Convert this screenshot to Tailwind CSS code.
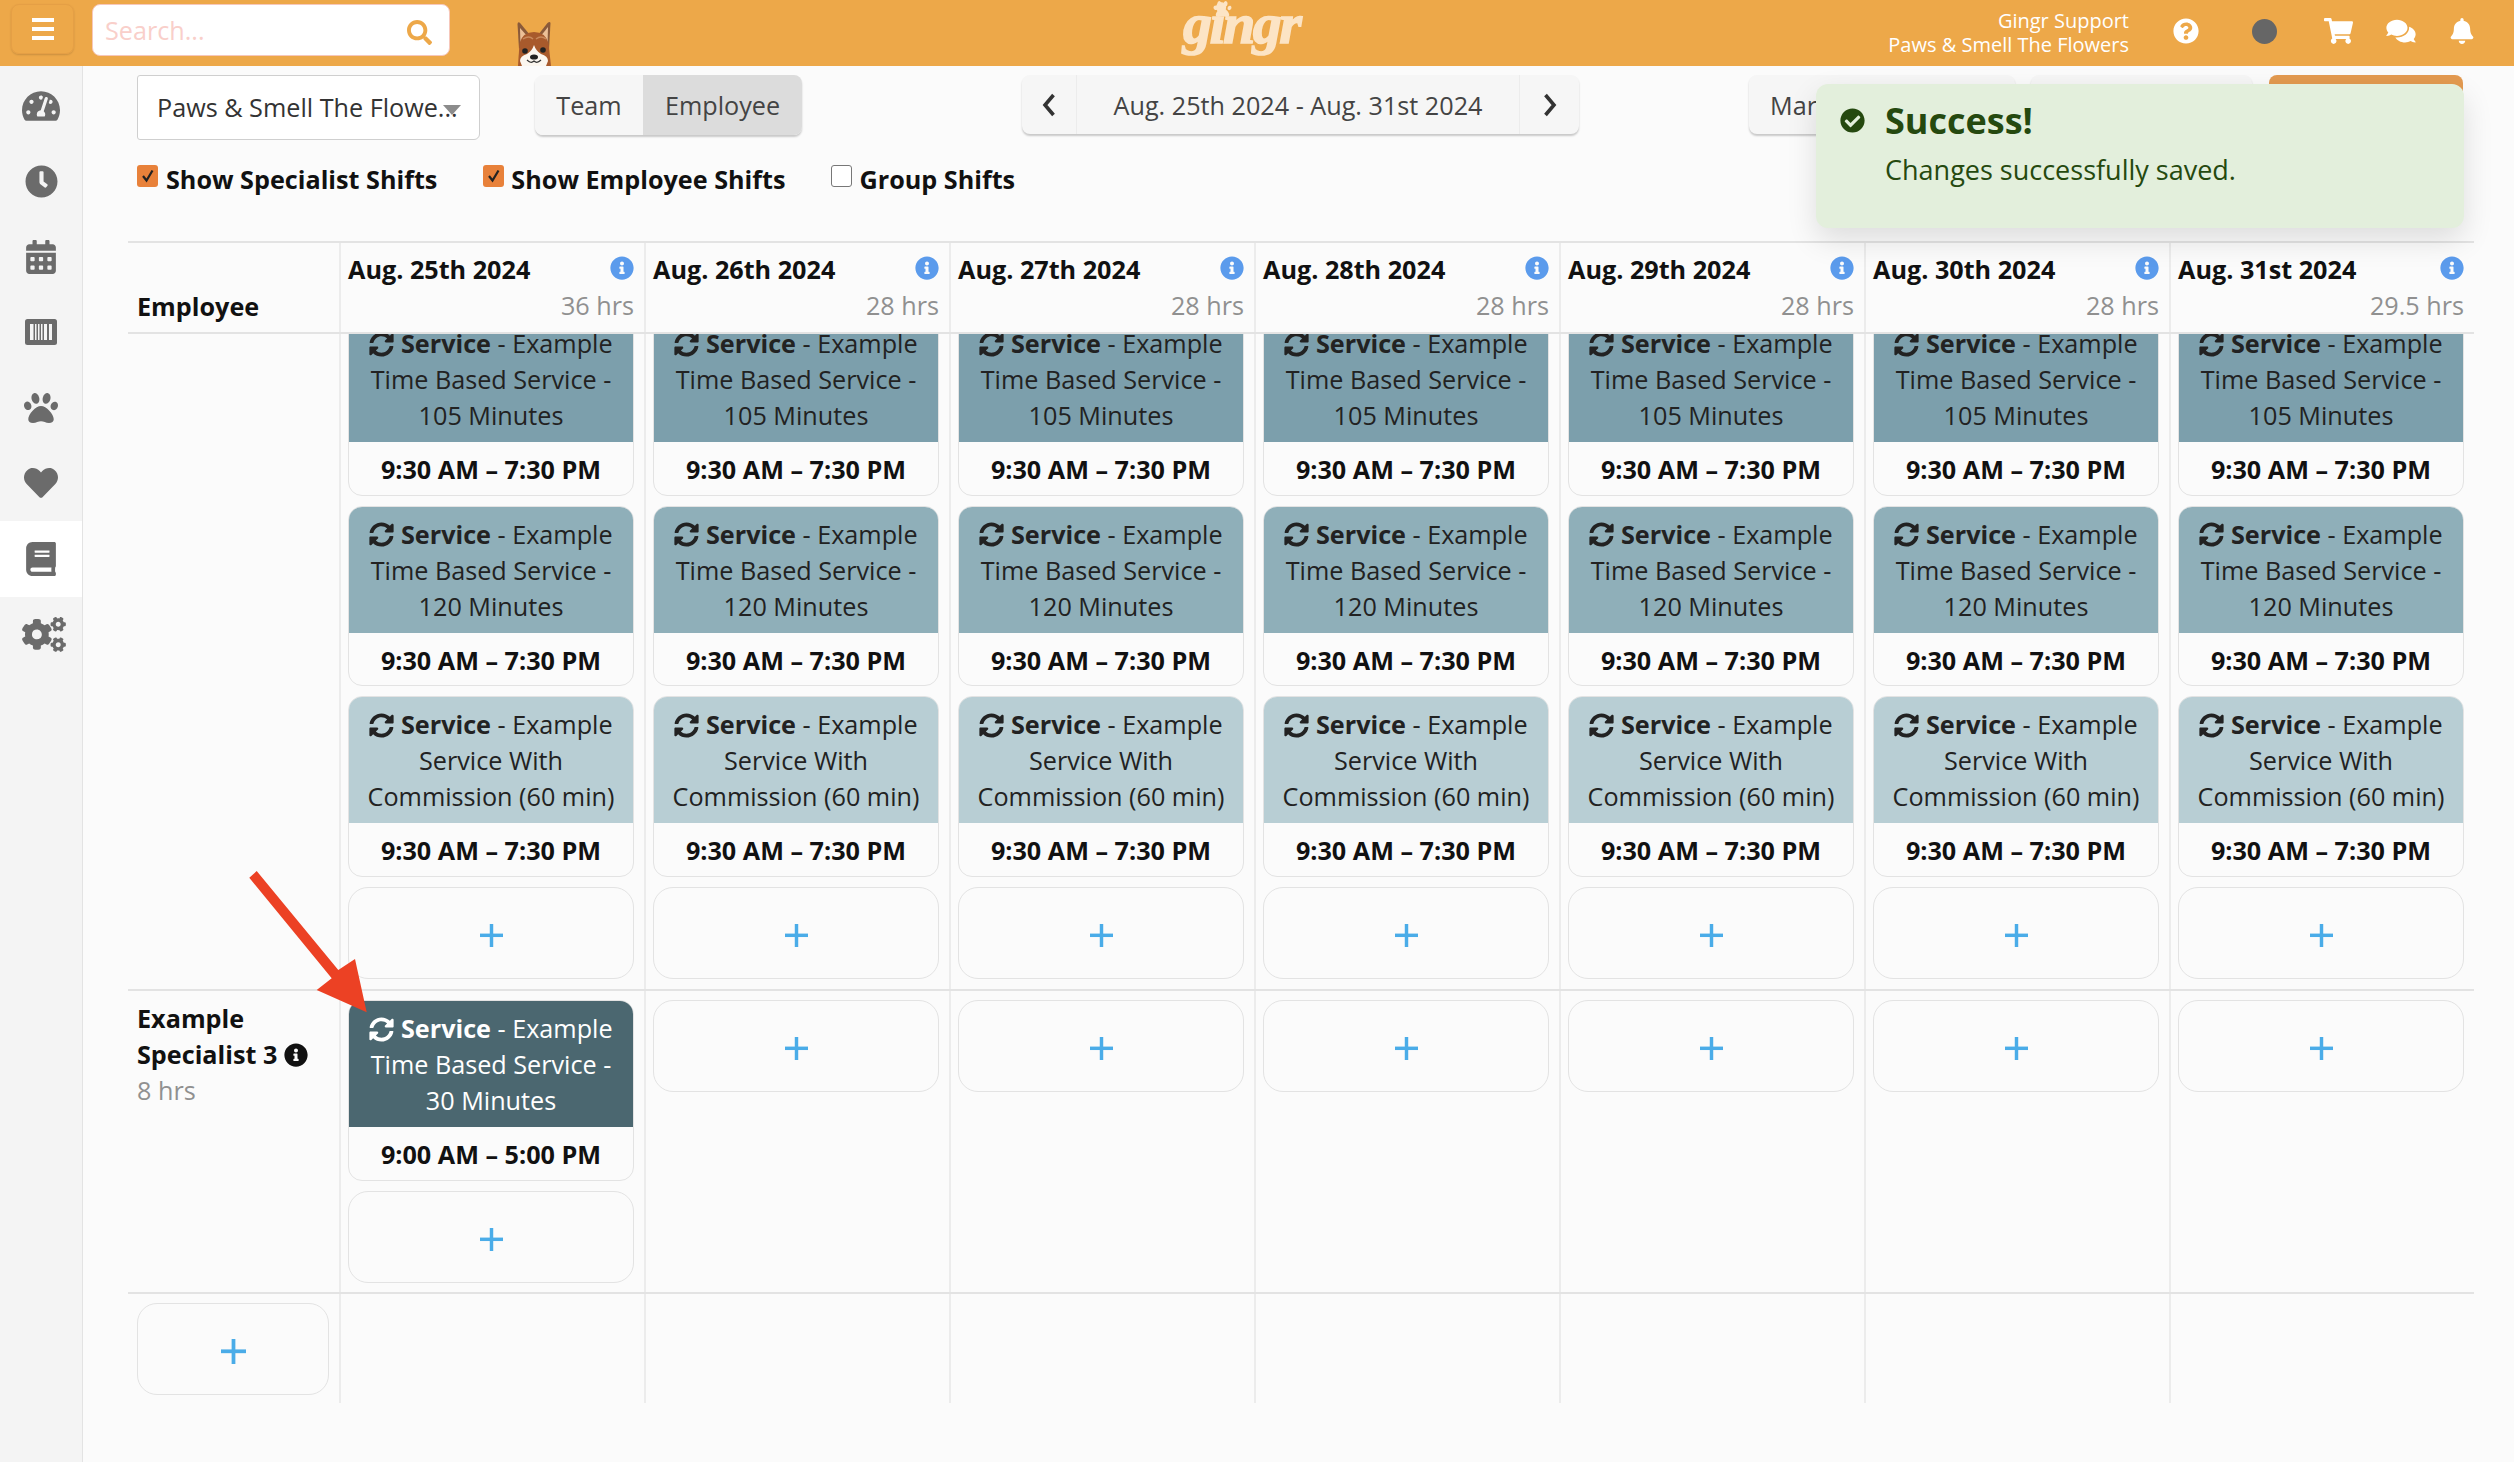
<!DOCTYPE html>
<html lang="en">
<head>
  <meta charset="UTF-8">
  <title>Gingr - Staff Schedule</title>
  <script src="https://cdn.jsdelivr.net/npm/@tailwindcss/browser@4"></script>
</head>
<body class="bg-[#fbfbfb] text-[#222] font-['Open_Sans',sans-serif] text-[25.2px] leading-[36px] h-[1462px] w-[2514px] overflow-hidden relative">

  <!-- icon sprites -->
  <svg class="hidden">
    <symbol id="sync" viewBox="0 0 512 512"><path fill="currentColor" d="M370.72 133.28C339.458 104.008 298.888 87.962 255.848 88c-77.458.068-144.328 53.178-162.791 126.85-1.344 5.363-6.122 9.15-11.651 9.15H24.103c-7.498 0-13.194-6.807-11.807-14.176C33.933 94.924 134.813 8 256 8c66.448 0 126.791 26.136 171.315 68.685L463.03 40.97C478.149 25.851 504 36.559 504 57.941V192c0 13.255-10.745 24-24 24H345.941c-21.382 0-32.09-25.851-16.971-40.971l41.75-41.749zM32 296h134.059c21.382 0 32.09 25.851 16.971 40.971l-41.75 41.75c31.262 29.273 71.835 45.319 114.876 45.28 77.418-.07 144.315-53.144 162.787-126.849 1.344-5.363 6.122-9.15 11.651-9.15h57.304c7.498 0 13.194 6.807 11.807 14.176C478.067 417.076 377.187 504 256 504c-66.448 0-126.791-26.136-171.315-68.685L48.97 471.03C33.851 486.149 8 475.441 8 454.059V320c0-13.255 10.745-24 24-24z"/></symbol>
    <symbol id="info" viewBox="0 0 512 512"><path fill="currentColor" d="M256 8C119.043 8 8 119.083 8 256c0 136.997 111.043 248 248 248s248-111.003 248-248C504 119.083 392.957 8 256 8zm0 110c23.196 0 42 18.804 42 42s-18.804 42-42 42-42-18.804-42-42 18.804-42 42-42zm56 254c0 6.627-5.373 12-12 12h-88c-6.627 0-12-5.373-12-12v-24c0-6.627 5.373-12 12-12h12v-64h-12c-6.627 0-12-5.373-12-12v-24c0-6.627 5.373-12 12-12h64c6.627 0 12 5.373 12 12v100h12c6.627 0 12 5.373 12 12v24z"/></symbol>
    <symbol id="plus" viewBox="0 0 24 24"><rect x="0" y="10" width="24" height="3.6" fill="currentColor"/><rect x="10.2" y="0" width="3.6" height="24" fill="currentColor"/></symbol>
  </svg>

  <!-- top bar -->
  <header class="h-[66px] bg-[#eda849] flex items-start relative">
    <button class="ml-[11px] mt-[4px] w-[63px] h-[50px] rounded-lg border border-[#e59f45] shadow-[0_1px_2px_rgba(0,0,0,0.15)] flex flex-col items-center justify-center gap-[5px]">
      <span class="w-[22px] h-[4px] bg-white"></span>
      <span class="w-[22px] h-[4px] bg-white"></span>
      <span class="w-[22px] h-[4px] bg-white"></span>
    </button>
    <div class="ml-[18px] mt-[4px] w-[358px] h-[52px] bg-white rounded-lg border border-[#f6c7bb] flex items-center pl-[12px] pr-[17px] justify-between">
      <span class="text-[#f9cfca]">Search...</span>
      <svg class="w-[25px] h-[25px] mt-[4px] text-[#eda849]" viewBox="0 0 512 512"><path fill="currentColor" d="M505 442.7L405.3 343c-4.5-4.5-10.6-7-17-7H372c27.6-35.3 44-79.7 44-128C416 93.1 322.9 0 208 0S0 93.1 0 208s93.1 208 208 208c48.3 0 92.7-16.4 128-44v16.3c0 6.4 2.5 12.5 7 17l99.7 99.7c9.4 9.4 24.6 9.4 33.9 0l28.3-28.3c9.4-9.4 9.4-24.6.1-34zM208 336c-70.7 0-128-57.2-128-128 0-70.7 57.2-128 128-128 70.7 0 128 57.2 128 128 0 70.7-57.2 128-128 128z"/></svg>
    </div>
    <!-- dog peeking over the content -->
    <svg class="ml-[65px] mt-[21px] w-[38px] h-[45px]" viewBox="0 0 38 45">
      <path d="M4 28 L2.500 3 Q3 0 5.500 2.500 L15 14 Z" fill="#8a5a3a"/>
      <path d="M34 28 L35.500 2 Q35 0 32.500 2 L23 14 Z" fill="#8a5a3a"/>
      <path d="M5.500 24 L5 7 L13 16 Z" fill="#ecc097"/>
      <path d="M32.500 24 L33 6 L25 16 Z" fill="#ecc097"/>
      <path d="M3 45 L4.500 22 Q8 11 19 11 Q30 11 33.500 22 L36 45 Z" fill="#a85a2c"/>
      <path d="M8 18 Q14 14 18 18 M21 18 Q26 14 31 18" stroke="#c98a5c" stroke-width="1.4" fill="none"/>
      <path d="M19 24 Q17 30 12 33 Q5 35 5 40 L7 45 L31 45 L33 40 Q33 35 26 33 Q21 30 19 24 Z" fill="#fbf6ef"/>
      <circle cx="10" cy="30" r="2.800" fill="#222"/>
      <circle cx="28" cy="29" r="2.800" fill="#222"/>
      <ellipse cx="19" cy="36" rx="4" ry="2.600" fill="#222"/>
      <path d="M12 39 Q16 43 19 40 Q22 43 26 39" stroke="#333" stroke-width="1.2" fill="none"/>
    </svg>
    <!-- logo -->
    <div class="ml-[630px] w-[120px] h-[66px] relative text-[#fce4c5]">
      <svg class="absolute left-[30px] top-0 w-[19px] h-[18px]" viewBox="0 0 512 512"><path fill="currentColor" d="M256 224c-79.41 0-192 122.76-192 200.25 0 34.9 26.81 55.75 71.74 55.75 48.84 0 81.09-25.08 120.26-25.08 39.51 0 71.85 25.08 120.26 25.08 44.93 0 71.74-20.85 71.74-55.75C448 346.76 335.41 224 256 224zm-147.28-12.61c-10.4-34.65-42.44-57.09-71.56-50.13-29.12 6.96-44.29 40.69-33.89 75.34 10.4 34.65 42.44 57.09 71.56 50.13 29.12-6.96 44.29-40.69 33.89-75.34zm84.72-20.78c30.94-8.14 46.42-49.94 34.58-93.36s-46.52-72.01-77.46-63.87-46.42 49.94-34.58 93.36c11.84 43.42 46.52 72.02 77.46 63.87zm281.39-29.34c-29.12-6.96-61.15 15.48-71.56 50.13-10.4 34.65 4.77 68.38 33.89 75.34 29.12 6.96 61.15-15.48 71.56-50.13 10.4-34.65-4.77-68.38-33.89-75.34zm-156.27 29.34c30.94 8.14 65.62-20.45 77.46-63.87 11.84-43.42-3.64-85.21-34.58-93.36s-65.62 20.45-77.46 63.87c-11.84 43.42 3.64 85.22 34.58 93.36z"/></svg>
      <span class="absolute left-0 top-0 font-['Liberation_Serif',serif] font-bold italic text-[58px] leading-[47px] tracking-[-2.500px] [-webkit-text-stroke:1.5px_#fce4c5]">gingr</span>
    </div>
    <!-- account and tools -->
    <div class="ml-auto flex items-center h-[66px] text-white">
      <div class="text-right text-[20px] leading-[24px] mr-[44px]">
        <div>Gingr Support</div>
        <div>Paws &amp; Smell The Flowers</div>
      </div>
      <svg class="w-[26px] h-[26px] mr-[53px] -mt-[4px]" viewBox="0 0 512 512"><path fill="currentColor" d="M504 256c0 136.997-111.043 248-248 248S8 392.997 8 256C8 119.083 119.043 8 256 8s248 111.083 248 248zM262.655 90c-54.497 0-89.255 22.957-116.549 63.758-3.536 5.286-2.353 12.415 2.715 16.258l34.699 26.31c5.205 3.947 12.621 3.008 16.665-2.122 17.864-22.658 30.113-35.797 57.303-35.797 20.429 0 45.698 13.148 45.698 32.958 0 14.976-12.363 22.667-32.534 33.976C247.128 238.528 216 254.941 216 296v4c0 6.627 5.373 12 12 12h56c6.627 0 12-5.373 12-12v-1.333c0-28.462 83.186-29.647 83.186-106.667 0-58.002-60.165-102-116.531-102zM256 338c-25.365 0-46 20.635-46 46 0 25.364 20.635 46 46 46s46-20.636 46-46c0-25.365-20.635-46-46-46z"/></svg>
      <span class="w-[25px] h-[25px] rounded-full bg-[#666] mr-[47px] -mt-[4px]"></span>
      <svg class="w-[29px] h-[26px] mr-[33px] -mt-[4px]" viewBox="0 0 576 512"><path fill="currentColor" d="M528.12 301.319l47.273-208C578.806 78.301 567.391 64 551.99 64H159.208l-9.166-44.81C147.758 8.021 137.93 0 126.529 0H24C10.745 0 0 10.745 0 24v16c0 13.255 10.745 24 24 24h69.883l70.248 343.435C147.325 417.1 136 435.222 136 456c0 30.928 25.072 56 56 56s56-25.072 56-56c0-15.674-6.447-29.835-16.824-40h209.647C430.447 426.165 424 440.326 424 456c0 30.928 25.072 56 56 56s56-25.072 56-56c0-22.172-12.888-41.332-31.579-50.405l5.517-24.276c3.413-15.018-8.002-29.319-23.403-29.319H218.117l-6.545-32h293.145c11.206 0 20.92-7.754 23.403-18.681z"/></svg>
      <svg class="w-[30px] h-[26px] mr-[34px] -mt-[4px]" viewBox="0 0 576 512"><path fill="currentColor" d="M416 192c0-88.4-93.1-160-208-160S0 103.6 0 192c0 34.3 14.1 65.9 38 92-13.4 30.2-35.5 54.2-35.8 54.5-2.2 2.3-2.8 5.7-1.5 8.7S4.8 352 8 352c36.6 0 66.9-12.3 88.7-25 32.2 15.7 70.3 25 111.3 25 114.9 0 208-71.6 208-160zm122 220c23.9-26 38-57.7 38-92 0-66.9-53.5-124.2-129.3-148.1.9 6.6 1.3 13.3 1.3 20.1 0 105.9-107.7 192-240 192-10.8 0-21.3-.8-31.7-1.9C207.8 439.6 281.8 480 368 480c41 0 79.1-9.2 111.3-25 21.8 12.7 52.1 25 88.7 25 3.2 0 6.1-1.9 7.3-4.8 1.3-2.9.7-6.3-1.5-8.7-.3-.3-22.4-24.2-35.8-54.5z"/></svg>
      <svg class="w-[24px] h-[26px] mr-[40px] -mt-[4px]" viewBox="0 0 448 512"><path fill="currentColor" d="M224 512c35.32 0 63.97-28.65 63.97-64H160.03c0 35.35 28.65 64 63.97 64zm215.39-149.71c-19.32-20.76-55.47-51.99-55.47-154.29 0-77.7-54.48-139.9-127.94-155.16V32c0-17.67-14.32-32-31.98-32s-31.98 14.33-31.98 32v20.84C118.56 68.1 64.08 130.3 64.08 208c0 102.3-36.15 133.53-55.47 154.29-6 6.45-8.66 14.16-8.61 21.71.11 16.4 12.98 32 32.1 32h383.8c19.12 0 32-15.6 32.1-32 .05-7.55-2.61-15.27-8.61-21.71z"/></svg>
    </div>
  </header>

  <div class="flex h-[1396px]">
    <!-- side nav -->
    <aside class="w-[83px] shrink-0 bg-[#f4f4f4] border-r border-[#e3e3e3] text-[#6b6b6b] pt-[2px]">
      <div class="h-[75.5px] flex items-center justify-center"><svg class="w-[38px] h-[38px]" viewBox="0 0 576 512"><path fill="currentColor" d="M288 32C128.94 32 0 160.94 0 320c0 52.8 14.25 102.26 39.06 144.8 5.61 9.62 16.3 15.2 27.44 15.2h443c11.14 0 21.83-5.58 27.44-15.2C561.75 422.26 576 372.8 576 320c0-159.06-128.94-288-288-288zm0 64c14.71 0 26.58 10.13 30.32 23.65-1.11 2.26-2.64 4.23-3.45 6.67l-9.22 27.67c-5.13 3.49-10.97 6.01-17.64 6.01-17.67 0-32-14.33-32-32S270.33 96 288 96zM96 384c-17.67 0-32-14.33-32-32s14.33-32 32-32 32 14.33 32 32-14.33 32-32 32zm48-160c-17.67 0-32-14.33-32-32s14.33-32 32-32 32 14.33 32 32-14.33 32-32 32zm246.77-72.41l-61.33 184C343.13 347.33 352 364.54 352 384c0 11.72-3.38 22.55-8.88 32H232.88c-5.5-9.45-8.88-20.28-8.88-32 0-33.94 26.5-61.43 59.9-63.59l61.34-184.01c4.17-12.56 17.73-19.45 30.36-15.17 12.57 4.19 19.35 17.79 15.17 30.36zm14.66 57.2l15.52-46.55c3.47-1.29 7.13-2.23 11.05-2.23 17.67 0 32 14.33 32 32s-14.33 32-32 32c-11.38-.01-20.89-6.28-26.57-15.22zM480 384c-17.67 0-32-14.33-32-32s14.33-32 32-32 32 14.33 32 32-14.33 32-32 32z"/></svg></div>
      <div class="h-[75.5px] flex items-center justify-center"><svg class="w-[33px] h-[33px]" viewBox="0 0 512 512"><path fill="currentColor" d="M256,8C119,8,8,119,8,256S119,504,256,504,504,393,504,256,393,8,256,8Zm92.49,313h0l-20,25a16,16,0,0,1-22.49,2.5h0l-67-49.72a40,40,0,0,1-15-31.23V112a16,16,0,0,1,16-16h32a16,16,0,0,1,16,16V256l58,42.5A16,16,0,0,1,348.49,321Z"/></svg></div>
      <div class="h-[75.5px] flex items-center justify-center"><svg class="w-[30px] h-[34px]" viewBox="0 0 448 512"><path fill="currentColor" d="M0 464c0 26.5 21.5 48 48 48h352c26.5 0 48-21.5 48-48V192H0v272zm320-196c0-6.6 5.4-12 12-12h40c6.6 0 12 5.4 12 12v40c0 6.6-5.4 12-12 12h-40c-6.6 0-12-5.4-12-12v-40zm0 128c0-6.6 5.4-12 12-12h40c6.6 0 12 5.4 12 12v40c0 6.6-5.4 12-12 12h-40c-6.6 0-12-5.4-12-12v-40zM192 268c0-6.6 5.4-12 12-12h40c6.6 0 12 5.4 12 12v40c0 6.6-5.4 12-12 12h-40c-6.6 0-12-5.4-12-12v-40zm0 128c0-6.6 5.4-12 12-12h40c6.6 0 12 5.4 12 12v40c0 6.6-5.4 12-12 12h-40c-6.6 0-12-5.4-12-12v-40zM64 268c0-6.6 5.4-12 12-12h40c6.6 0 12 5.4 12 12v40c0 6.6-5.4 12-12 12H76c-6.6 0-12-5.4-12-12v-40zm0 128c0-6.6 5.4-12 12-12h40c6.6 0 12 5.4 12 12v40c0 6.6-5.4 12-12 12H76c-6.6 0-12-5.4-12-12v-40zM400 64h-48V16c0-8.8-7.2-16-16-16h-32c-8.8 0-16 7.2-16 16v48H160V16c0-8.8-7.2-16-16-16h-32c-8.8 0-16 7.2-16 16v48H48C21.5 64 0 85.5 0 112v48h448v-48c0-26.5-21.5-48-48-48z"/></svg></div>
      <div class="h-[75.5px] flex items-center justify-center"><svg class="w-[32px] h-[26px]" viewBox="0 0 32 26"><rect width="32" height="26" rx="2.5" fill="currentColor"/><path d="M5 5h3.500v16H5zM10 5h1.500v16H10zM13 5h1.500v16H13zM16 5h1.500v16H16zM19 5h3v16h-3zM24 5h3v16h-3z" fill="#f4f4f4"/></svg></div>
      <div class="h-[75.5px] flex items-center justify-center"><svg class="w-[34px] h-[34px]" viewBox="0 0 512 512"><path fill="currentColor" d="M256 224c-79.41 0-192 122.76-192 200.25 0 34.9 26.81 55.75 71.74 55.75 48.84 0 81.09-25.08 120.26-25.08 39.51 0 71.85 25.08 120.26 25.08 44.93 0 71.74-20.85 71.74-55.75C448 346.76 335.41 224 256 224zm-147.28-12.61c-10.4-34.65-42.44-57.09-71.56-50.13-29.12 6.96-44.29 40.69-33.89 75.34 10.4 34.65 42.44 57.09 71.56 50.13 29.12-6.96 44.29-40.69 33.89-75.34zm84.72-20.78c30.94-8.14 46.42-49.94 34.58-93.36s-46.52-72.01-77.46-63.87-46.42 49.94-34.58 93.36c11.84 43.42 46.52 72.02 77.46 63.87zm281.39-29.34c-29.12-6.96-61.15 15.48-71.56 50.13-10.4 34.65 4.77 68.38 33.89 75.34 29.12 6.96 61.15-15.48 71.56-50.13 10.4-34.65-4.77-68.38-33.89-75.34zm-156.27 29.34c30.94 8.14 65.62-20.45 77.46-63.87 11.84-43.42-3.64-85.21-34.58-93.36s-65.62 20.45-77.46 63.87c-11.84 43.42 3.64 85.22 34.58 93.36z"/></svg></div>
      <div class="h-[75.5px] flex items-center justify-center"><svg class="w-[34px] h-[34px]" viewBox="0 0 512 512"><path fill="currentColor" d="M462.3 62.6C407.5 15.9 326 24.3 275.7 76.2L256 96.5l-19.7-20.3C186.1 24.3 104.5 15.9 49.7 62.6c-62.8 53.6-66.1 149.8-9.9 207.9l193.5 199.8c12.5 12.9 32.8 12.9 45.3 0l193.5-199.8c56.3-58.1 53-154.3-9.8-207.9z"/></svg></div>
      <div class="h-[75.5px] flex items-center justify-center bg-white"><svg class="w-[30px] h-[34px]" viewBox="0 0 448 512"><path fill="currentColor" d="M448 360V24c0-13.3-10.7-24-24-24H96C43 0 0 43 0 96v320c0 53 43 96 96 96h328c13.3 0 24-10.7 24-24v-16c0-7.5-3.5-14.3-8.9-18.7-4.2-15.4-4.2-59.3 0-74.7 5.4-4.3 8.9-11.1 8.9-18.6zM128 134c0-3.3 2.7-6 6-6h212c3.3 0 6 2.7 6 6v20c0 3.3-2.7 6-6 6H134c-3.3 0-6-2.7-6-6v-20zm0 64c0-3.3 2.7-6 6-6h212c3.3 0 6 2.7 6 6v20c0 3.3-2.7 6-6 6H134c-3.3 0-6-2.7-6-6v-20zm253.4 250H96c-17.7 0-32-14.3-32-32 0-17.6 14.4-32 32-32h285.4c-1.9 17.1-1.9 46.9 0 64z"/></svg></div>
      <div class="h-[75.5px] flex items-center justify-center pl-[5px]"><svg class="w-[44px] h-[35px]" viewBox="0 0 640 512"><path fill="currentColor" d="M512.1 191l-8.2 14.3c-3 5.3-9.4 7.5-15.1 5.4-11.8-4.4-22.6-10.7-32.1-18.6-4.6-3.8-5.8-10.5-2.8-15.7l8.2-14.3c-6.9-8-12.3-17.3-15.9-27.4h-16.5c-6 0-11.2-4.3-12.2-10.3-2-12-2.1-24.6 0-37.1 1-6 6.2-10.4 12.2-10.4h16.5c3.6-10.1 9-19.4 15.9-27.4l-8.2-14.3c-3-5.2-1.9-11.9 2.8-15.7 9.5-7.9 20.4-14.2 32.1-18.6 5.7-2.1 12.1.1 15.1 5.4l8.2 14.3c10.5-1.9 21.2-1.9 31.7 0L552 6.3c3-5.3 9.4-7.5 15.1-5.4 11.8 4.4 22.6 10.7 32.1 18.6 4.6 3.8 5.8 10.5 2.8 15.7l-8.2 14.3c6.9 8 12.3 17.3 15.9 27.4h16.5c6 0 11.2 4.3 12.2 10.3 2 12 2.1 24.6 0 37.1-1 6-6.2 10.4-12.2 10.4h-16.5c-3.6 10.1-9 19.4-15.9 27.4l8.2 14.3c3 5.2 1.9 11.9-2.8 15.7-9.5 7.9-20.4 14.2-32.1 18.6-5.7 2.1-12.1-.1-15.1-5.4l-8.2-14.3c-10.4 1.9-21.2 1.9-31.7 0zm-10.5-58.8c38.5 29.6 82.4-14.3 52.8-52.8-38.5-29.7-82.4 14.3-52.8 52.8zM386.3 286.1l33.7 16.8c10.1 5.8 14.5 18.1 10.5 29.1-8.9 24.2-26.4 46.4-42.6 65.8-7.4 8.9-20.2 11.1-30.3 5.3l-29.1-16.8c-16 13.7-34.6 24.6-54.9 31.7v33.6c0 11.6-8.3 21.6-19.7 23.6-24.6 4.2-50.4 4.4-75.9 0-11.5-2-20-11.9-20-23.6V418c-20.3-7.2-38.9-18-54.9-31.7L74 403c-10 5.8-22.9 3.6-30.3-5.3-16.2-19.4-33.3-41.6-42.2-65.7-4-10.9.4-23.2 10.5-29.1l33.3-16.8c-3.9-20.9-3.9-42.4 0-63.4L12 205.8c-10.1-5.8-14.6-18.1-10.5-29 8.9-24.2 26-46.4 42.2-65.8 7.4-8.9 20.2-11.1 30.3-5.3l29.1 16.8c16-13.7 34.6-24.6 54.9-31.7V57.1c0-11.5 8.2-21.5 19.6-23.5 24.6-4.2 50.5-4.4 76-.1 11.5 2 20 11.9 20 23.6v33.6c20.3 7.2 38.9 18 54.9 31.7l29.1-16.8c10-5.8 22.9-3.6 30.3 5.3 16.2 19.4 33.2 41.6 42.1 65.8 4 10.9.1 23.2-10 29.1l-33.7 16.8c3.9 21 3.9 42.5 0 63.5zm-117.6 21.1c59.2-77-28.7-164.9-105.7-105.7-59.2 77 28.7 164.9 105.7 105.7zm243.4 182.7l-8.2 14.3c-3 5.3-9.4 7.5-15.1 5.4-11.8-4.4-22.6-10.7-32.1-18.6-4.6-3.8-5.8-10.5-2.8-15.7l8.2-14.3c-6.9-8-12.3-17.3-15.9-27.4h-16.5c-6 0-11.2-4.3-12.2-10.3-2-12-2.1-24.6 0-37.1 1-6 6.2-10.4 12.2-10.4h16.5c3.6-10.1 9-19.4 15.9-27.4l-8.2-14.3c-3-5.2-1.9-11.9 2.8-15.7 9.5-7.9 20.4-14.2 32.1-18.6 5.7-2.1 12.1.1 15.1 5.4l8.2 14.3c10.5-1.9 21.2-1.9 31.7 0l8.2-14.3c3-5.3 9.4-7.5 15.1-5.4 11.8 4.4 22.6 10.7 32.1 18.6 4.6 3.8 5.8 10.5 2.8 15.7l-8.2 14.3c6.9 8 12.3 17.3 15.9 27.4h16.5c6 0 11.2 4.3 12.2 10.3 2 12 2.1 24.6 0 37.1-1 6-6.2 10.4-12.2 10.4h-16.5c-3.6 10.1-9 19.4-15.9 27.4l8.2 14.3c3 5.2 1.9 11.9-2.8 15.7-9.5 7.9-20.4 14.2-32.1 18.6-5.7 2.1-12.1-.1-15.1-5.4l-8.2-14.3c-10.4 1.9-21.2 1.9-31.7 0zM501.6 431c38.5 29.6 82.4-14.3 52.8-52.8-38.5-29.6-82.4 14.3-52.8 52.8z"/></svg></div>
    </aside>

    <main class="pl-[45px] pt-[9px]">
      <!-- toolbar -->
      <div class="flex items-start pl-[9px] h-[65px]">
        <div class="w-[343px] h-[65px] bg-white border border-[#cfcfcf] rounded-[3px] rounded-tr-md rounded-br-md flex items-center pl-[19px] pb-[2px] relative text-[#333]">
          Paws &amp; Smell The Flowe...
          <span class="absolute left-[305px] top-[29px] w-0 h-0 border-l-[9px] border-r-[9px] border-t-[10px] border-l-transparent border-r-transparent border-t-[#8c8c8c]"></span>
        </div>
        <div class="ml-[55px] flex w-[267px] h-[60px] rounded-lg shadow-[0_2px_2px_rgba(0,0,0,0.2)] text-[#444] overflow-hidden">
          <div class="w-[108px] bg-[#f6f6f6] flex items-center justify-center">Team</div>
          <div class="flex-1 bg-[#dcdcdc] flex items-center justify-center">Employee</div>
        </div>
        <div class="ml-[220px] flex w-[557px] h-[59px] rounded-lg bg-[#f6f6f6] shadow-[0_2px_2px_rgba(0,0,0,0.2)] text-[#444]">
          <div class="w-[55px] border-r border-[#ececec] flex items-center justify-center">
            <svg class="w-[14px] h-[24px]" viewBox="0 0 14 24"><path d="M11.5 2 L3 12 L11.5 22" stroke="#333" stroke-width="3.6" fill="none"/></svg>
          </div>
          <div class="flex-1 flex items-center justify-center">Aug. 25th 2024 - Aug. 31st 2024</div>
          <div class="w-[60px] border-l border-[#ececec] flex items-center justify-center">
            <svg class="w-[14px] h-[24px]" viewBox="0 0 14 24"><path d="M2.5 2 L11 12 L2.5 22" stroke="#333" stroke-width="3.6" fill="none"/></svg>
          </div>
        </div>
        <div class="ml-[170px] w-[266px] h-[59px] rounded-lg bg-[#f6f6f6] shadow-[0_2px_2px_rgba(0,0,0,0.2)] flex items-center pl-[21px] text-[#444]">Mark</div>
        <div class="ml-[16px] w-[221px] h-[59px] rounded-lg bg-[#f6f6f6] shadow-[0_2px_2px_rgba(0,0,0,0.2)]"></div>
        <div class="ml-[17px] w-[194px] h-[59px] rounded-lg bg-[#e39a50]"></div>
      </div>

      <!-- filters -->
      <div class="flex items-center pl-[9px] mt-[21px] h-[36px] font-bold text-[#111]">
        <span class="w-[21px] h-[22px] -mt-[7px] rounded-[3px] bg-[#e8813a] flex items-center justify-center">
          <svg class="w-[14px] h-[14px]" viewBox="0 0 14 14"><path d="M2 7 L5.5 11.5 L11.5 1.5" stroke="#222" stroke-width="2.2" fill="none"/></svg>
        </span>
        <span class="ml-[8px]">Show Specialist Shifts</span>
        <span class="ml-[46px] w-[21px] h-[22px] -mt-[7px] rounded-[3px] bg-[#e8813a] flex items-center justify-center">
          <svg class="w-[14px] h-[14px]" viewBox="0 0 14 14"><path d="M2 7 L5.5 11.5 L11.5 1.5" stroke="#222" stroke-width="2.2" fill="none"/></svg>
        </span>
        <span class="ml-[7px]">Show Employee Shifts</span>
        <span class="ml-[45px] w-[21px] h-[22px] -mt-[7px] rounded-[3px] bg-white border border-[#777]"></span>
        <span class="ml-[8px]">Group Shifts</span>
      </div>

      <!-- schedule table, filled in below -->
      <div id="schedule" class="w-[2346px] mt-[44px] border-t-2 border-[#e3e3e3]"></div>
    </main>
  </div>

  <!-- toast -->
  <div class="absolute left-[1816px] top-[84px] w-[648px] h-[144px] rounded-xl bg-[#e3efdc] text-[#25490f] shadow-[0_12px_30px_rgba(0,0,0,0.12)] pl-[69px] pt-[12px]">
    <svg class="absolute left-[24px] top-[24px] w-[25px] h-[25px]" viewBox="0 0 512 512"><path fill="currentColor" d="M504 256c0 136.967-111.033 248-248 248S8 392.967 8 256 119.033 8 256 8s248 111.033 248 248zM227.314 387.314l184-184c6.248-6.248 6.248-16.379 0-22.627l-22.627-22.627c-6.248-6.249-16.379-6.249-22.628 0L216 308.118l-70.059-70.059c-6.248-6.248-16.379-6.248-22.628 0l-22.627 22.627c-6.248 6.248-6.248 16.379 0 22.627l104 104c6.249 6.249 16.379 6.249 22.628.001z"/></svg>
    <div class="font-bold text-[36px] leading-[50px]">Success!</div>
    <div class="mt-[6px] text-[27px] leading-[36px]">Changes successfully saved.</div>
  </div>

  <!-- red annotation arrow -->
  <svg class="absolute left-[240px] top-[860px] w-[140px] h-[165px]" viewBox="240 860 140 165">
    <path d="M249.300 877.700 L256.700 871 L338.300 970 L355 959 L366.700 1012.300 L316.700 990 L331.700 978.300 Z" fill="#ec4124"/>
  </svg>

  <script>
    const days = [
      ['Aug. 25th 2024', '36 hrs'], ['Aug. 26th 2024', '28 hrs'], ['Aug. 27th 2024', '28 hrs'],
      ['Aug. 28th 2024', '28 hrs'], ['Aug. 29th 2024', '28 hrs'], ['Aug. 30th 2024', '28 hrs'],
      ['Aug. 31st 2024', '29.5 hrs']
    ];

    function card(bg, lines, time) {
      return `<div class="h-[180.67px] mb-[10px] rounded-[14px] border border-[#e3e3e3] overflow-hidden">
        <div class="${bg} h-[127px] -mx-px -mt-px pt-[10px] text-center">
          <svg class="inline-block w-[25px] h-[25px] -mt-[4px]"><use href="#sync"/></svg> <b class="font-bold">Service</b> - ${lines[0]}<br>${lines[1]}<br>${lines[2]}
        </div>
        <div class="h-[54px] flex items-center justify-center font-bold text-[#111]">${time}</div>
      </div>`;
    }

    function addBtn() {
      return `<div class="h-[92px] rounded-[20px] border border-[#e3e3e3] flex items-center justify-center text-[#4aace8]"><svg class="w-[23px] h-[23px] mt-[5px]"><use href="#plus"/></svg></div>`;
    }

    const time = '9:30 AM – 7:30 PM';
    const staffCards =
      card('bg-[#7c9fac]', ['Example', 'Time Based Service -', '105 Minutes'], time) +
      card('bg-[#8fafb9]', ['Example', 'Time Based Service -', '120 Minutes'], time) +
      card('bg-[#b8ced4]', ['Example', 'Service With', 'Commission (60 min)'], time) +
      addBtn();

    let html = '<div class="grid grid-cols-[211px_repeat(7,1fr)] h-[91px] border-b-2 border-[#e3e3e3]">';
    html += '<div class="pl-[9px] pt-[45px] font-bold text-[#111]">Employee</div>';
    html += days.map(d => `<div class="border-l-2 border-[#ececec] pl-[7px] pr-[10px] pt-[8px]">
      <div class="flex justify-between items-center h-[36px] font-bold text-[#111]">${d[0]}<svg class="w-[24px] h-[24px] text-[#5b9bec] -mt-[2px]"><use href="#info"/></svg></div>
      <div class="text-right text-[#909090]">${d[1]}</div>
    </div>`).join('');
    html += '</div>';

    // first row scrolled slightly, top of the first card is clipped
    html += '<div class="grid grid-cols-[211px_repeat(7,1fr)] h-[655px] overflow-hidden">';
    html += '<div></div>';
    html += days.map(() => `<div class="border-l-2 border-[#ececec] pl-[7px] pr-[10px] overflow-hidden"><div class="-mt-[19px]">${staffCards}</div></div>`).join('');
    html += '</div>';

    // Example Specialist 3
    html += '<div class="grid grid-cols-[211px_repeat(7,1fr)] h-[303px] border-t-2 border-[#e3e3e3]">';
    html += `<div class="pl-[9px] pt-[9px]">
      <div class="font-bold text-[#111]">Example<br>Specialist 3 <svg class="inline-block w-[24px] h-[24px] text-[#111] -mt-[4px]"><use href="#info"/></svg></div>
      <div class="text-[#909090]">8 hrs</div>
    </div>`;
    html += days.map((d, i) => `<div class="border-l-2 border-[#ececec] pl-[7px] pr-[10px] pt-[9px]">${
      i === 0
        ? card('bg-[#4b6770] text-white', ['Example', 'Time Based Service -', '30 Minutes'], '9:00 AM – 5:00 PM') + addBtn()
        : addBtn()
    }</div>`).join('');
    html += '</div>';

    // add employee row
    html += '<div class="grid grid-cols-[211px_repeat(7,1fr)] h-[111px] border-t-2 border-[#e3e3e3]">';
    html += `<div class="pl-[9px] pr-[9px] pt-[9px]"><div class="h-[92px] w-[192px] rounded-[20px] border border-[#e3e3e3] flex items-center justify-center text-[#4aace8]"><svg class="w-[25px] h-[25px] mt-[4px]"><use href="#plus"/></svg></div></div>`;
    html += days.map(() => '<div class="border-l-2 border-[#ececec]"></div>').join('');
    html += '</div>';

    document.getElementById('schedule').innerHTML = html;
  </script>
</body>
</html>
